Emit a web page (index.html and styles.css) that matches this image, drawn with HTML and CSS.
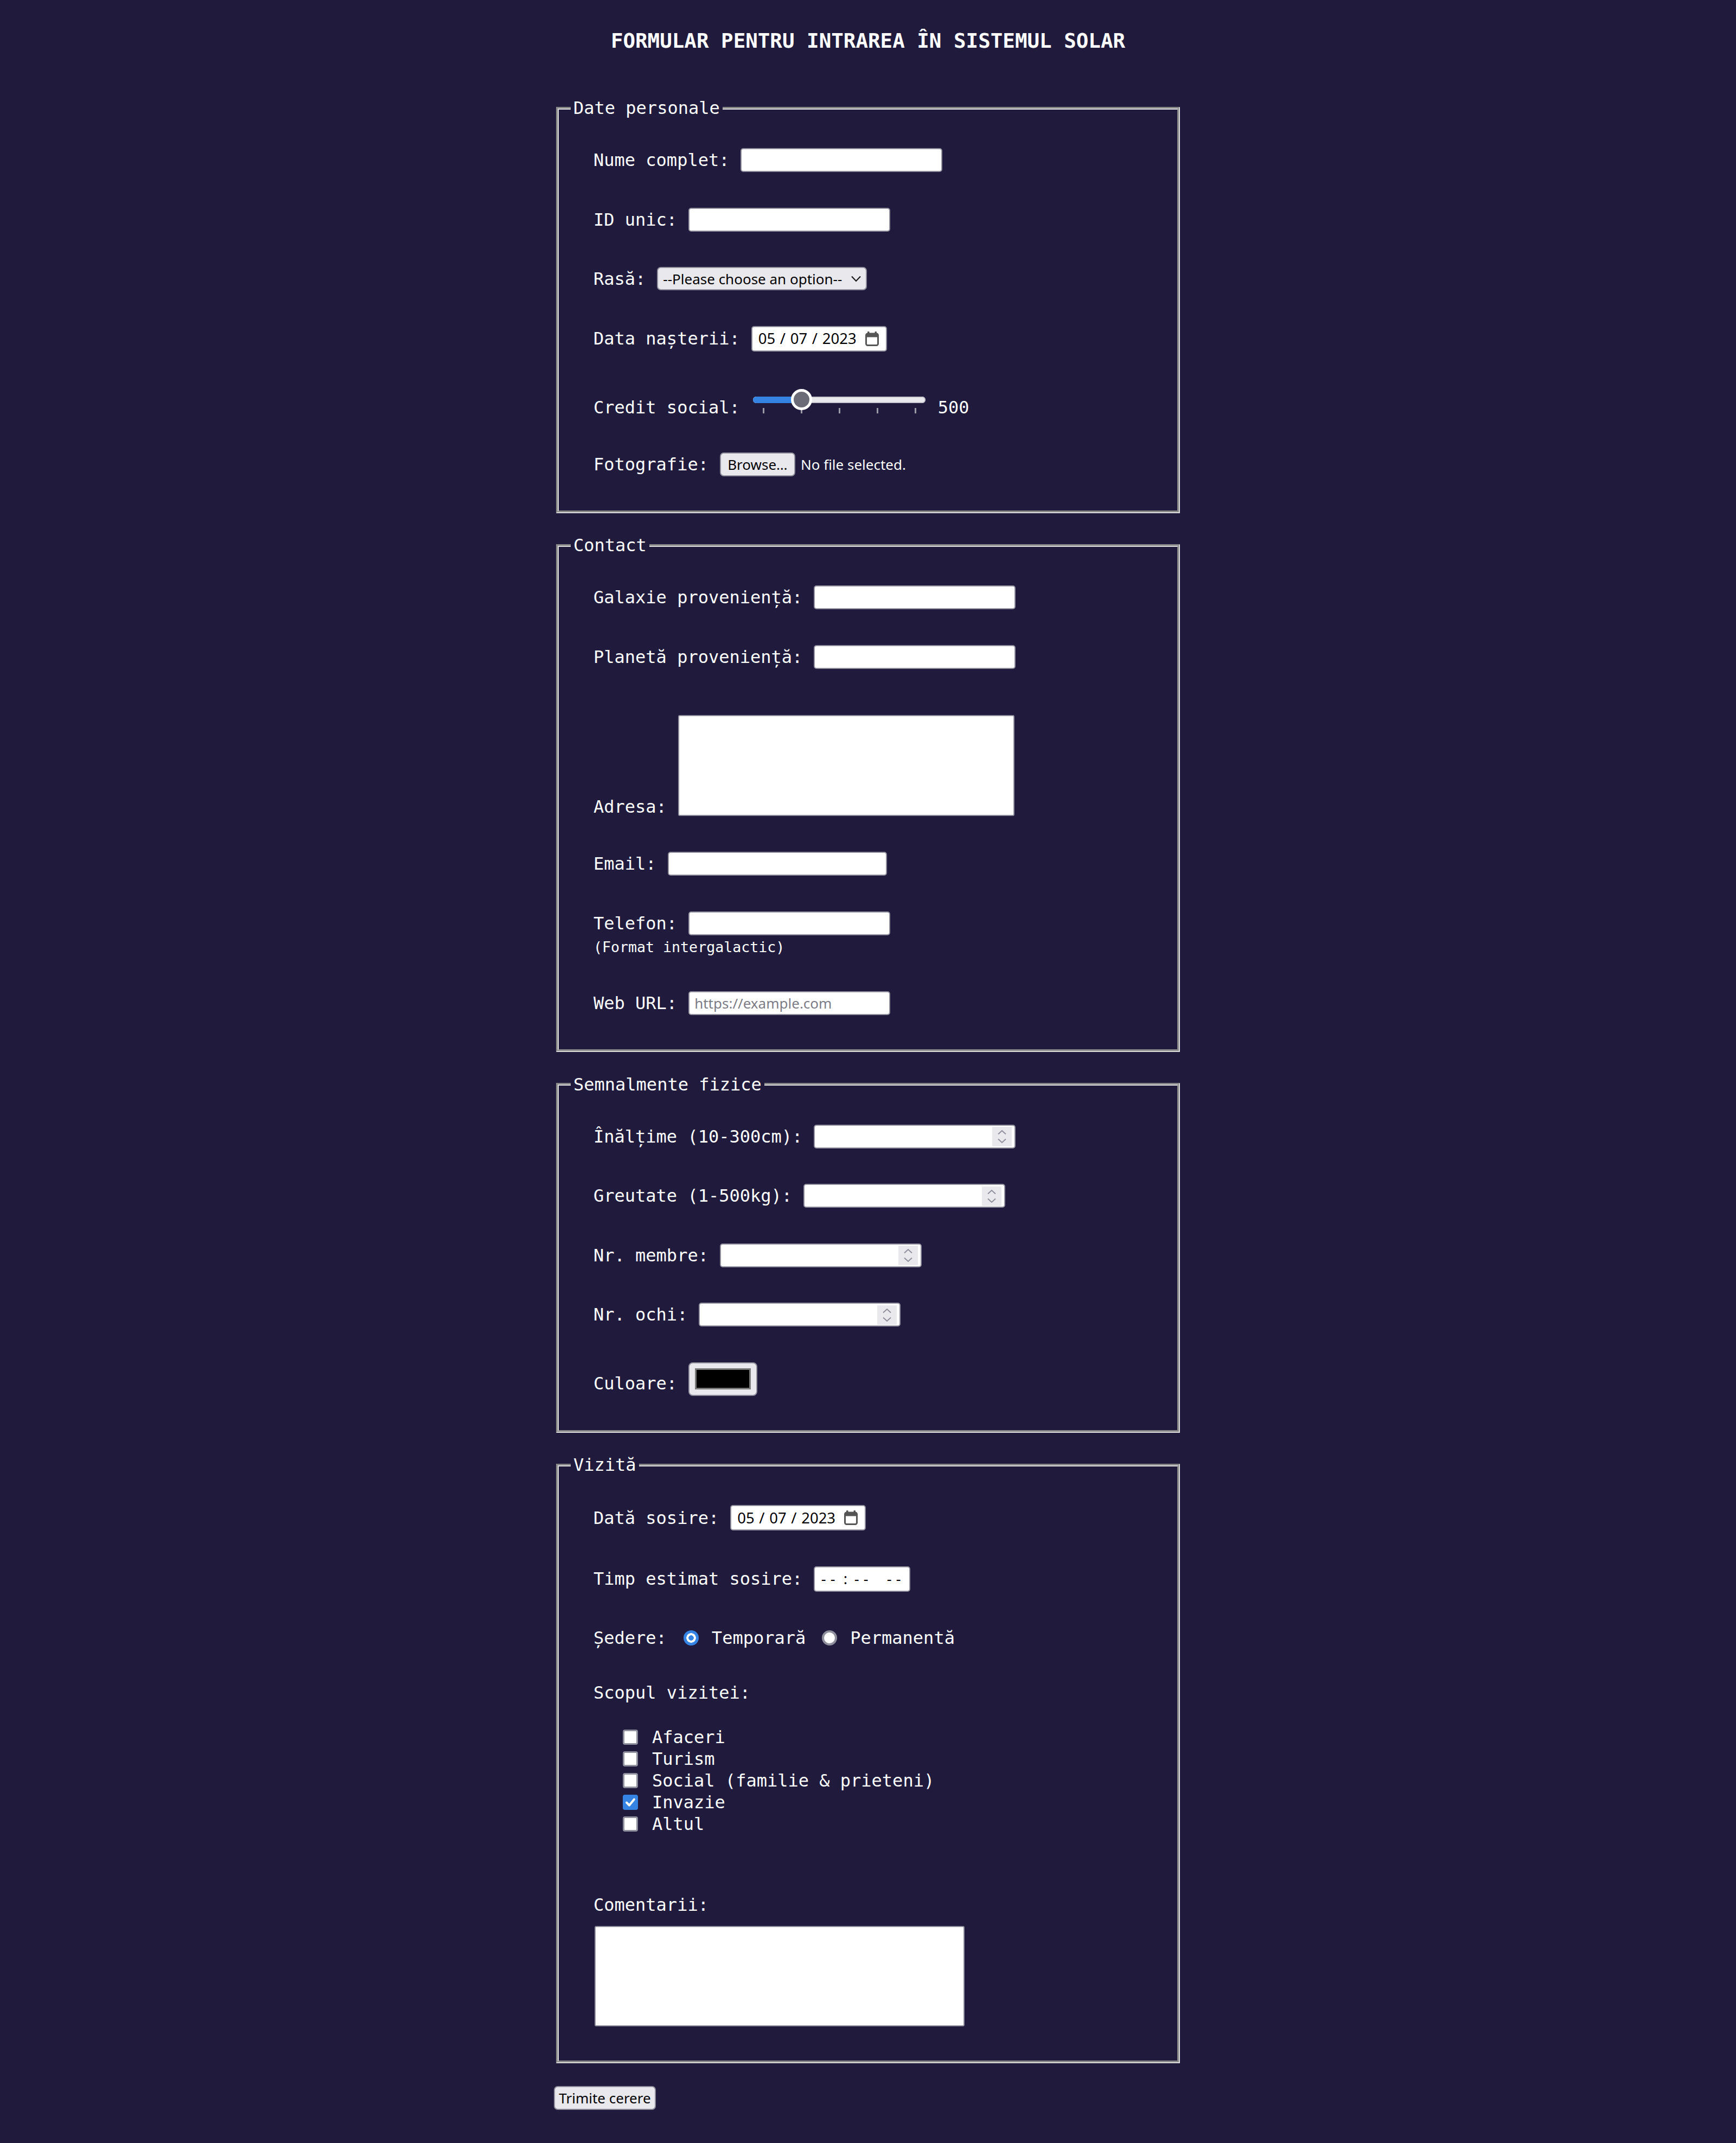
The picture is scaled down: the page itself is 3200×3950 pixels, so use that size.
FILE: index.html
```html
<!DOCTYPE html>
<html lang="ro">
<head>
<meta charset="utf-8">
<title>Formular pentru intrarea în sistemul solar</title>
<link rel="stylesheet" href="styles.css">
</head>
<body>
<h1 class="title">FORMULAR PENTRU INTRAREA ÎN SISTEMUL SOLAR</h1>
<form class="form">
  <fieldset class="group">
    <legend class="legend">Date personale</legend>
    <div class="fields">
      <div class="row"><label class="lbl" for="nume">Nume complet:</label><input class="field" id="nume" type="text"></div>
      <div class="row"><label class="lbl" for="uid">ID unic:</label><input class="field" id="uid" type="text"></div>
      <div class="row"><span class="lbl">Rasă:</span><span class="select">--Please choose an option--<svg class="chev" width="20" height="12" viewBox="0 0 20 12"><path d="M2 1.5 L10 10 L18 1.5" fill="none" stroke="#1b1b1b" stroke-width="2.2"/></svg></span></div>
      <div class="row"><span class="lbl">Data nașterii:</span><span class="datefield"><span class="date-text">05 / 07 / 2023</span><svg class="cal" width="25" height="27" viewBox="0 0 25 27"><rect x="4" y="0" width="3.5" height="6" rx="1" fill="#555"/><rect x="17.5" y="0" width="3.5" height="6" rx="1" fill="#555"/><rect x="1.5" y="4" width="22" height="21.5" rx="3" fill="#fff" stroke="#555" stroke-width="3"/><path d="M1.5 7 a3 3 0 0 1 3 -3 h16 a3 3 0 0 1 3 3 v3.5 h-22 z" fill="#555"/></svg></span></div>
      <div class="row row--range"><span class="lbl">Credit social:</span><span class="range"><span class="range-track"><span class="range-fill"></span></span><span class="range-ticks"><i></i><i></i><i></i><i></i><i></i></span><span class="range-thumb"></span></span><span class="lbl">500</span></div>
      <div class="row row--file"><span class="lbl">Fotografie:</span><span class="file"><span class="btn btn--browse">Browse…</span><span class="file-status">No file selected.</span></span></div>
    </div>
  </fieldset>

  <fieldset class="group">
    <legend class="legend">Contact</legend>
    <div class="fields">
      <div class="row"><label class="lbl" for="galaxie">Galaxie proveniență:</label><input class="field" id="galaxie" type="text"></div>
      <div class="row"><label class="lbl" for="planeta">Planetă proveniență:</label><input class="field" id="planeta" type="text"></div>
      <div class="row row--area"><label class="lbl" for="adresa">Adresa:</label><textarea class="area" id="adresa"></textarea></div>
      <div class="row row--email"><label class="lbl" for="email">Email:</label><input class="field field--email" id="email" type="text"></div>
      <div class="stack">
        <div class="row"><label class="lbl" for="tel">Telefon:</label><input class="field" id="tel" type="text"></div>
        <small class="hint">(Format intergalactic)</small>
      </div>
      <div class="row row--url"><label class="lbl" for="url">Web URL:</label><input class="field" id="url" type="text" placeholder="https://example.com"></div>
    </div>
  </fieldset>

  <fieldset class="group">
    <legend class="legend">Semnalmente fizice</legend>
    <div class="fields">
      <div class="row"><span class="lbl">Înălțime (10-300cm):</span><span class="number"><span class="spin"><svg width="36" height="36" viewBox="0 0 36 36"><path d="M11 13.5 L18 7 L25 13.5 M11 22.5 L18 29 L25 22.5" fill="none" stroke="#8f8f9d" stroke-width="2"/></svg></span></span></div>
      <div class="row"><span class="lbl">Greutate (1-500kg):</span><span class="number"><span class="spin"><svg width="36" height="36" viewBox="0 0 36 36"><path d="M11 13.5 L18 7 L25 13.5 M11 22.5 L18 29 L25 22.5" fill="none" stroke="#8f8f9d" stroke-width="2"/></svg></span></span></div>
      <div class="row"><span class="lbl">Nr. membre:</span><span class="number"><span class="spin"><svg width="36" height="36" viewBox="0 0 36 36"><path d="M11 13.5 L18 7 L25 13.5 M11 22.5 L18 29 L25 22.5" fill="none" stroke="#8f8f9d" stroke-width="2"/></svg></span></span></div>
      <div class="row"><span class="lbl">Nr. ochi:</span><span class="number"><span class="spin"><svg width="36" height="36" viewBox="0 0 36 36"><path d="M11 13.5 L18 7 L25 13.5 M11 22.5 L18 29 L25 22.5" fill="none" stroke="#8f8f9d" stroke-width="2"/></svg></span></span></div>
      <div class="row row--color"><span class="lbl">Culoare:</span><span class="color"><span class="swatch"></span></span></div>
    </div>
  </fieldset>

  <fieldset class="group">
    <legend class="legend">Vizită</legend>
    <div class="fields">
      <div class="row"><span class="lbl">Dată sosire:</span><span class="datefield"><span class="date-text">05 / 07 / 2023</span><svg class="cal" width="25" height="27" viewBox="0 0 25 27"><rect x="4" y="0" width="3.5" height="6" rx="1" fill="#555"/><rect x="17.5" y="0" width="3.5" height="6" rx="1" fill="#555"/><rect x="1.5" y="4" width="22" height="21.5" rx="3" fill="#fff" stroke="#555" stroke-width="3"/><path d="M1.5 7 a3 3 0 0 1 3 -3 h16 a3 3 0 0 1 3 3 v3.5 h-22 z" fill="#555"/></svg></span></div>
      <div class="row"><span class="lbl">Timp estimat sosire:</span><span class="timefield"><span class="seg">--</span><span class="sep">:</span><span class="seg seg--min">--</span><span class="seg seg--ampm">--</span></span></div>
      <div class="row row--radio"><span class="lbl">Ședere:</span><span class="radios"><span class="radio radio--on"></span><span class="opt">Temporară</span><span class="radio radio--second"></span><span class="opt">Permanentă</span></span></div>
      <div class="lbl-line line--purpose">Scopul vizitei:</div>
      <div class="checks">
        <div class="check"><span class="box"></span><span class="opt">Afaceri</span></div>
        <div class="check"><span class="box"></span><span class="opt">Turism</span></div>
        <div class="check"><span class="box"></span><span class="opt">Social (familie &amp; prieteni)</span></div>
        <div class="check"><span class="box box--on"><svg width="28" height="28" viewBox="0 0 28 28"><path d="M7 14.5 L12 19.5 L21 8.5" fill="none" stroke="#fff" stroke-width="4" stroke-linecap="round" stroke-linejoin="round"/></svg></span><span class="opt">Invazie</span></div>
        <div class="check"><span class="box"></span><span class="opt">Altul</span></div>
      </div>
      <div class="lbl-line line--comments"><label for="comentarii">Comentarii:</label></div>
      <textarea class="area area--comments" id="comentarii"></textarea>
    </div>
  </fieldset>

  <button class="btn btn--submit" type="button">Trimite cerere</button>
</form>
</body>
</html>
```

FILE: styles.css
```css
* {
  box-sizing: border-box;
}

html {
  background: #201b3d;
}

body {
  margin: 0;
  padding-top: 53px;
  min-height: 3950px;
  background: #201b3d;
  color: #ffffff;
  font-family: "DejaVu Sans Mono", "Liberation Mono", monospace;
  font-size: 32px;
  line-height: 40px;
}

.title {
  margin: 0;
  font-size: 37.5px;
  line-height: 45px;
  font-weight: bold;
  text-align: center;
}

.form {
  width: 1160px;
  margin: 81px auto 0;
}

.group {
  margin: 0 5px;
  padding: 54px 22px 63px;
  border: 5px groove #dcdcdc;
  min-width: 0;
}

.group + .group {
  margin-top: 39.5px;
}

.legend {
  padding: 0 5px;
  font-size: 32px;
  line-height: 40px;
}

.fields {
  display: flex;
  flex-direction: column;
  gap: 65.5px;
  padding-left: 42px;
}

.row {
  display: flex;
  align-items: center;
  column-gap: 21px;
}

.lbl {
  white-space: pre;
  flex: none;
}

.field,
.select,
.datefield,
.timefield,
.btn,
.file-status {
  font-family: "Noto Sans", "Open Sans", sans-serif;
  font-size: 26px;
}

.field {
  appearance: none;
  width: 372px;
  height: 44px;
  margin: 0;
  padding: 0 9px;
  border: 2.5px solid #8f8f9d;
  border-radius: 5px;
  background: #ffffff;
  color: #000000;
  flex: none;
}

.field::placeholder {
  color: #7c7c86;
}

.field--email {
  width: 404px;
}

.select {
  display: inline-flex;
  align-items: center;
  justify-content: space-between;
  width: 387px;
  height: 43px;
  padding: 0 8px 0 9px;
  border: 2.5px solid #8f8f9d;
  border-radius: 7px;
  background: #e9e9ed;
  color: #000000;
  line-height: 1;
}

.chev {
  display: block;
}

.datefield {
  display: inline-flex;
  align-items: center;
  justify-content: space-between;
  width: 250px;
  height: 47px;
  padding: 0 13px 0 11px;
  border: 2.5px solid #8f8f9d;
  border-radius: 5px;
  background: #ffffff;
  color: #000000;
  line-height: 1;
}

.date-text {
  white-space: pre;
  font-size: 27.5px;
  word-spacing: 1.5px;
}

.cal {
  display: block;
}

.timefield {
  display: inline-flex;
  align-items: center;
  width: 178px;
  height: 47px;
  padding: 0 0 0 11.5px;
  border: 2.5px solid #8f8f9d;
  border-radius: 5px;
  background: #ffffff;
  color: #000000;
  line-height: 1;
  font-size: 27.5px;
}

.seg {
  display: block;
  width: 26px;
  letter-spacing: 8px;
  white-space: pre;
}

.sep {
  display: block;
  margin-left: 15px;
  width: 8px;
}

.seg--min {
  margin-left: 12px;
}

.seg--ampm {
  margin-left: 34px;
}

.row--range {
  align-items: flex-end;
  margin-top: 4px;
}

.range {
  position: relative;
  width: 323px;
  height: 45px;
  margin-bottom: 9px;
  flex: none;
}

.range-track {
  position: absolute;
  left: 3px;
  right: 2px;
  top: 14px;
  height: 12px;
  border-radius: 6px;
  background: #e9e9ed;
  box-shadow: inset 0 0 0 1.5px #b9b9c2;
  overflow: hidden;
}

.range-fill {
  display: block;
  width: 90px;
  height: 100%;
  background: #3584e4;
}

.range-ticks {
  position: absolute;
  left: 21.75px;
  width: 282.5px;
  top: 35px;
  height: 10px;
  display: flex;
  justify-content: space-between;
}

.range-ticks i {
  display: block;
  width: 2.5px;
  height: 10px;
  background: #9a9aa6;
}

.range-thumb {
  position: absolute;
  left: 73px;
  top: 0;
  width: 39px;
  height: 39px;
  border-radius: 50%;
  background: #6b6b77;
  border: 5px solid #ffffff;
}

.row--file {
  margin-top: -3px;
}

.file {
  display: flex;
  align-items: center;
  column-gap: 10px;
}

.btn {
  display: inline-flex;
  align-items: center;
  justify-content: center;
  height: 44px;
  padding: 0;
  border: 2.5px solid #8f8f9d;
  border-radius: 7px;
  background: #e9e9ed;
  color: #000000;
  line-height: 1;
  white-space: pre;
}

.btn--browse {
  width: 139px;
}

.file-status {
  color: #ffffff;
}

.row--area {
  align-items: flex-end;
  margin-top: 19.5px;
}

.area {
  display: block;
  width: 620px;
  height: 186px;
  margin: 0 0 3px;
  border: 2.5px solid #8f8f9d;
  border-radius: 3px;
  background: #ffffff;
  resize: none;
  flex: none;
}

.row--email {
  margin-top: -2px;
}

.stack {
  display: flex;
  flex-direction: column;
}

.hint {
  display: block;
  margin-top: 6px;
  font-size: 26.6px;
  line-height: 31px;
}

.row--url {
  margin-top: 1px;
}

.number {
  display: inline-flex;
  align-items: center;
  justify-content: flex-end;
  width: 372px;
  height: 44px;
  padding: 2px 5px 1px 0;
  border: 2.5px solid #8f8f9d;
  border-radius: 5px;
  background: #ffffff;
}

.spin {
  display: block;
  width: 36px;
  height: 36px;
  background: #e9e9ed;
}

.spin svg {
  display: block;
}

.row--color {
  align-items: flex-end;
}

.row--color .lbl {
  margin-bottom: 3px;
}

.color {
  display: inline-flex;
  align-items: center;
  justify-content: center;
  width: 127px;
  height: 62px;
  border: 2.5px solid #8f8f9d;
  border-radius: 8px;
  background: #e9e9ed;
}

.swatch {
  display: block;
  width: 103px;
  height: 39px;
  background: #000000;
  border: 3px solid #7a7a7a;
}

.radios {
  display: flex;
  align-items: center;
}

.radio {
  display: block;
  width: 28px;
  height: 28px;
  margin-left: 10px;
  border-radius: 50%;
  background: #ffffff;
  border: 4.5px solid #8f8f9d;
  flex: none;
}

.radio--on {
  border: none;
  background: radial-gradient(circle, #3584e4 0 4.5px, #ffffff 5px 8.5px, #3584e4 9px);
}

.radio--second {
  margin-left: 30px;
}

.opt {
  white-space: pre;
  margin-left: 24px;
}

.line--purpose {
  margin-top: -4.5px;
}

.checks {
  display: flex;
  flex-direction: column;
  padding-left: 54px;
  margin-top: -23.5px;
}

.check {
  display: flex;
  align-items: center;
  height: 40px;
}

.check .opt {
  margin-left: 26px;
}

.box {
  display: block;
  width: 28px;
  height: 28px;
  border: 3.5px solid #8f8f9d;
  border-radius: 4px;
  background: #ffffff;
  flex: none;
}

.box--on {
  border: none;
  background: #3584e4;
}

.box svg {
  display: block;
}

.line--comments {
  margin-top: 43.5px;
}

.area--comments {
  width: 682px;
  height: 185px;
  margin: -47px 0 0 2px;
}

.btn--submit {
  width: 188px;
  margin: 42px 0 0 1px;
}
```
